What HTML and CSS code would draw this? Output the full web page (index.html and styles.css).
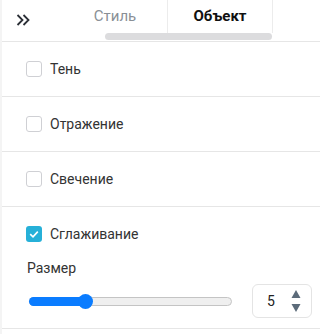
FILE: index.html
```html
<!DOCTYPE html>
<html>
<head>
<meta charset="utf-8">
<link rel="stylesheet" href="styles.css">
</head>
<body>
<div class="page">
  <div class="strip"></div>
  <div class="panel">
    <div class="header">
      <div class="collapse">
        <svg width="14" height="12" viewBox="0 0 14 12"><path d="M1.5 1 L6.5 6 L1.5 11 M7.5 1 L12.5 6 L7.5 11" fill="none" stroke="#2b2f36" stroke-width="1.8"/></svg>
      </div>
      <div class="tabs">
        <div class="tabrow">
          <div class="tab">Стиль</div>
          <div class="tab active">Объект</div>
        </div>
        <div class="scrollbar"></div>
      </div>
    </div>
    <div class="row">
      <span class="cb"></span><span class="label">Тень</span>
    </div>
    <div class="row">
      <span class="cb"></span><span class="label">Отражение</span>
    </div>
    <div class="row">
      <span class="cb"></span><span class="label">Свечение</span>
    </div>
    <div class="section">
      <div class="check-line">
        <span class="cb checked"><svg width="16" height="16" viewBox="0 0 16 16"><path d="M4.2 8.2 L7 10.8 L11.8 5.6" fill="none" stroke="#fff" stroke-width="1.6"/></svg></span><span class="label">Сглаживание</span>
      </div>
      <div class="size-label">Размер</div>
      <div class="size-line">
        <div class="slider">
          <div class="fill"></div>
          <div class="thumb"></div>
        </div>
        <div class="number">
          <span class="num">5</span>
          <span class="spin">
            <svg width="10" height="24" viewBox="0 0 10 24"><path d="M5 1 L9.5 9 L0.5 9 Z M0.5 15 L9.5 15 L5 23 Z" fill="#5c6b7a"/></svg>
          </span>
        </div>
      </div>
    </div>
  </div>
</div>
</body>
</html>
```

FILE: styles.css
```css
html, body {
  margin: 0;
  padding: 0;
  background: #fff;
}
body {
  font-family: Roboto, "Liberation Sans", sans-serif;
  color: #2e2e2e;
  width: 320px;
  height: 334px;
  overflow: hidden;
}
.page {
  display: flex;
  height: 334px;
}
.strip {
  width: 2px;
  flex: none;
  background: #f4f4f4;
}
.panel {
  flex: 1;
  display: flex;
  flex-direction: column;
}
.header {
  height: 41px;
  border-bottom: 1px solid #e6e6e6;
  display: flex;
}
.collapse {
  width: 61px;
  display: flex;
  align-items: flex-start;
  padding-top: 14px;
  padding-left: 14px;
  box-sizing: border-box;
}
.tabs {
  display: flex;
  flex-direction: column;
}
.tabrow {
  display: flex;
  height: 33px;
}
.tab {
  width: 104px;
  text-align: center;
  font-size: 15px;
  line-height: 32px;
  color: #8a8f96;
}
.tab.active {
  width: 104px;
  color: #111;
  font-weight: bold;
  border-left: 1px solid #ececec;
  border-right: 1px solid #ececec;
}
.scrollbar {
  margin-left: 42px;
  width: 167px;
  height: 7px;
  border-radius: 4px;
  background: #dcdcde;
}
.row {
  height: 54px;
  border-bottom: 1px solid #e6e6e6;
  display: flex;
  align-items: center;
  padding-left: 24px;
}
.cb {
  width: 14px;
  height: 14px;
  border: 1px solid #cfd0d4;
  border-radius: 3px;
  flex: none;
  display: flex;
  align-items: center;
  justify-content: center;
}
.cb.checked {
  width: 16px;
  height: 16px;
  border: none;
  background: #26b0d8;
}
.label {
  font-size: 14px;
  margin-left: 8px;
  color: #333;
}
.section {
  height: 122px;
  border-bottom: 1px solid #e6e6e6;
  box-sizing: border-box;
  padding: 19px 0 0 24px;
}
.check-line {
  display: flex;
  align-items: center;
  height: 16px;
}
.size-label {
  font-size: 14px;
  margin-top: 17px;
  margin-left: 1px;
  line-height: 18px;
  color: #333;
}
.size-line {
  display: flex;
  align-items: center;
  margin-top: 7px;
}
.slider {
  position: relative;
  margin-left: 3px;
  width: 201px;
  height: 7px;
  border: 1px solid #c4c4c4;
  border-radius: 5px;
  background: #efefef;
}
.fill {
  position: absolute;
  left: -1px;
  top: -1px;
  width: 57px;
  height: 9px;
  border-radius: 5px;
  background: #0a7cff;
}
.thumb {
  position: absolute;
  left: 48px;
  top: -4px;
  width: 15px;
  height: 15px;
  border-radius: 50%;
  background: #0a7cff;
}
.number {
  margin-left: 20px;
  width: 58px;
  height: 32px;
  border: 1px solid #e4e4e4;
  border-radius: 6px;
  display: flex;
  align-items: center;
  box-sizing: content-box;
}
.num {
  font-size: 14px;
  margin-left: 14px;
  color: #222;
}
.spin {
  margin-left: 16px;
  display: flex;
}
```
